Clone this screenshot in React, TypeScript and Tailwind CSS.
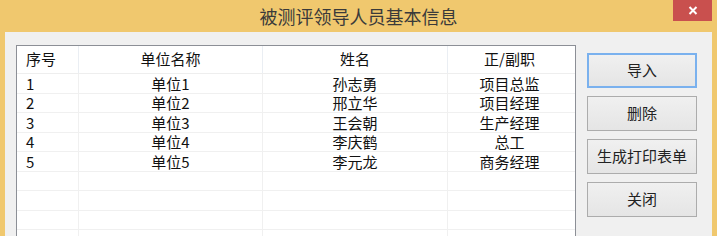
import React from "react";

type Row = { no: string; unit: string; name: string; title: string };

const ROWS: Row[] = [
  { no: "1", unit: "单位1", name: "孙志勇", title: "项目总监" },
  { no: "2", unit: "单位2", name: "邢立华", title: "项目经理" },
  { no: "3", unit: "单位3", name: "王会朝", title: "生产经理" },
  { no: "4", unit: "单位4", name: "李庆鹤", title: "总工" },
  { no: "5", unit: "单位5", name: "李元龙", title: "商务经理" },
];

const EMPTY = 4;
const COLS = "grid grid-cols-[62px_184px_185px_123px]";
const FONT = { fontFamily: '"Noto Sans CJK SC", "Noto Sans", sans-serif' };

function Btn({ label, focused }: { label: string; focused?: boolean }) {
  return (
    <button
      className={
        "w-[110px] h-[35px] flex items-center justify-center text-[15px] text-[#222] bg-gradient-to-b from-[#f0f0f0] to-[#e5e5e5] " +
        (focused ? "border-2 border-[#7ab1ee]" : "border border-[#acacac]")
      }
    >
      {label}
    </button>
  );
}

export default function App() {
  return (
    <div className="w-[717px] h-[236px] bg-[#f0c86e] flex flex-col overflow-hidden" style={FONT}>
      {/* title bar */}
      <div className="relative h-[32px] shrink-0 flex items-center justify-center">
        <span className="text-[18px] text-[#3a3a3a]">被测评领导人员基本信息</span>
        <div className="absolute top-0 right-[5px] w-[39px] h-[21px] bg-[#c9504e] flex items-center justify-center">
          <svg width="10" height="9" viewBox="0 0 10 9">
            <path d="M1.5 1 L8.5 8 M8.5 1 L1.5 8" stroke="#fff" strokeWidth="2" />
          </svg>
        </div>
      </div>

      {/* client area */}
      <div className="flex-1 mx-[5px] bg-[#f0f0f0] flex pl-[11px] pt-[13px] min-h-0">
        <div className="w-[560px] h-[200px] shrink-0 bg-white border border-[#8c8f96] overflow-hidden">
          {/* header */}
          <div className={COLS + " h-[28px] border-b border-[#eeeeee] text-[15px] text-[#111]"}>
            <div className="flex items-center pl-[9px] border-r border-[#eaeef3]">序号</div>
            <div className="flex items-center justify-center border-r border-[#eaeef3]">单位名称</div>
            <div className="flex items-center justify-center border-r border-[#eaeef3]">姓名</div>
            <div className="flex items-center justify-center">正/副职</div>
          </div>
          {ROWS.map((r) => (
            <div key={r.no} className={COLS + " h-[19.5px] border-b border-[#f0f0f0] text-[15px] leading-none text-[#111]"}>
              <div className="flex items-center pl-[9px] border-r border-[#f0f0f0]">{r.no}</div>
              <div className="flex items-center justify-center border-r border-[#f0f0f0]">{r.unit}</div>
              <div className="flex items-center justify-center border-r border-[#f0f0f0]">{r.name}</div>
              <div className="flex items-center justify-center">{r.title}</div>
            </div>
          ))}
          {Array.from({ length: EMPTY }).map((_, i) => (
            <div key={i} className={COLS + " h-[19.5px] border-b border-[#f0f0f0]"}>
              <div className="border-r border-[#f0f0f0]" />
              <div className="border-r border-[#f0f0f0]" />
              <div className="border-r border-[#f0f0f0]" />
              <div />
            </div>
          ))}
        </div>

        <div className="ml-[11px] pt-[8px] flex flex-col gap-[8px]">
          <Btn label="导入" focused />
          <Btn label="删除" />
          <Btn label="生成打印表单" />
          <Btn label="关闭" />
        </div>
      </div>
    </div>
  );
}
